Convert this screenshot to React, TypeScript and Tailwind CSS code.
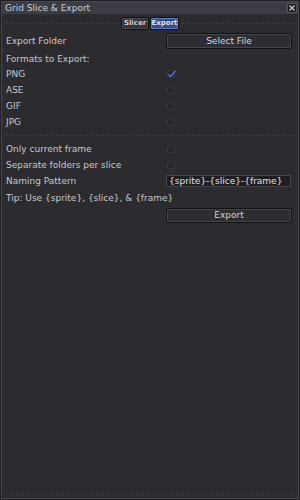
import React from 'react';

const font = { fontFamily: '"DejaVu Sans", "Liberation Sans", sans-serif' };

const Dotted: React.FC<{ className?: string }> = ({ className = '' }) => (
  <div className={`h-0 border-t border-dashed border-[#3c3d44] ${className}`} />
);

const Check: React.FC<{ checked?: boolean }> = ({ checked }) => (
  <div className="ml-[1px] w-[8px] h-[8px] rounded-[2px] border border-[#3a3b41] bg-[#28282d] relative">
    {checked && (
      <svg className="absolute -left-[1px] -top-[2px]" width="10" height="10" viewBox="0 0 10 10">
        <path d="M1.5 5.5 L3.5 7.5 L8.5 2" stroke="#1d2740" strokeWidth="3" fill="none" />
        <path d="M1.5 5.5 L3.5 7.5 L8.5 2" stroke="#5b7fd1" strokeWidth="1.3" fill="none" />
      </svg>
    )}
  </div>
);

const Row: React.FC<{ label?: string; children?: React.ReactNode; h?: string }> = ({ label, children, h = 'h-[16px]' }) => (
  <div className={`flex items-center ${h}`}>
    <div className="w-[164px] pl-[4px] text-[#c9c9c9] whitespace-nowrap">{label}</div>
    <div className="flex-1 flex items-center">{children}</div>
  </div>
);

const Btn: React.FC<{ label: string; className?: string }> = ({ label, className = '' }) => (
  <div className={`w-[126px] flex items-center justify-center border border-[#121214] rounded-[2px] bg-[#2d2e33] shadow-[inset_0_0_0_1px_#45464c] text-[#d6d6d6] ${className}`}>
    {label}
  </div>
);

export default function App() {
  return (
    <div className="w-[300px] h-[500px] bg-[#1f2024] p-[1px] text-[9px] leading-none" style={font}>
      <div className="w-full h-full flex flex-col border border-[#45474d] bg-[#2b2b30]">
        <div className="h-[12px] flex items-center justify-between bg-[#3a3d45] pl-[3px] pr-[1px] text-[#cdd0d6]">
          <span>Grid Slice &amp; Export</span>
          <div className="w-[10px] h-[10px] bg-[#1e1f23] border border-[#55575d] flex items-center justify-center">
            <svg width="6" height="6" viewBox="0 0 6 6">
              <path d="M0.5 0.5 L5.5 5.5 M5.5 0.5 L0.5 5.5" stroke="#c8c8c8" strokeWidth="1.3" />
            </svg>
          </div>
        </div>
        <div className="flex-1 flex flex-col pt-[3px]">
          <div className="flex items-center h-[13px] px-[3px]">
            <Dotted className="flex-1" />
            <div className="flex mx-[2px] text-[7px] font-bold">
              <div className="w-[28px] h-[13px] shrink-0 flex items-center justify-center border border-[#111] rounded-[2px] bg-[#34353a] shadow-[inset_0_0_0_1px_#4a4b50] text-[#cfcfcf]">Slicer</div>
              <div className="w-[29px] h-[13px] shrink-0 ml-[1px] flex items-center justify-center border border-[#111] rounded-[2px] bg-[#3b4c7c] shadow-[inset_0_0_0_1px_#5d7ed0] text-[#dfe4ef]">Export</div>
            </div>
            <Dotted className="flex-1" />
          </div>
          <div className="mt-[2px] flex flex-col">
            <Row label="Export Folder" h="h-[18px]">
              <Btn label="Select File" className="h-[16px]" />
            </Row>
            <div className="h-[3px]" />
            <Row label="Formats to Export:" h="h-[13px]" />
            <Row label="PNG"><Check checked /></Row>
            <Row label="ASE"><Check /></Row>
            <Row label="GIF"><Check /></Row>
            <Row label="JPG"><Check /></Row>
            <Dotted className="mx-[3px] my-[5px]" />
            <Row label="Only current frame"><Check /></Row>
            <Row label="Separate folders per slice"><Check /></Row>
            <Row label="Naming Pattern">
              <div className="w-[125px] h-[12px] flex items-center px-[2px] bg-[#1e1f23] border border-[#45464c] text-[#e0e0e0]">
                {'{sprite}-{slice}-{frame}'}
              </div>
            </Row>
            <div className="h-[18px] flex items-center pl-[4px] text-[#c9c9c9]">Tip: Use {'{sprite}'}, {'{slice}'}, &amp; {'{frame}'}</div>
            <Row>
              <Btn label="Export" className="h-[15px]" />
            </Row>
          </div>
          <div className="flex-1" />
          <Dotted className="mx-[4px] mb-[3px]" />
        </div>
      </div>
    </div>
  );
}
